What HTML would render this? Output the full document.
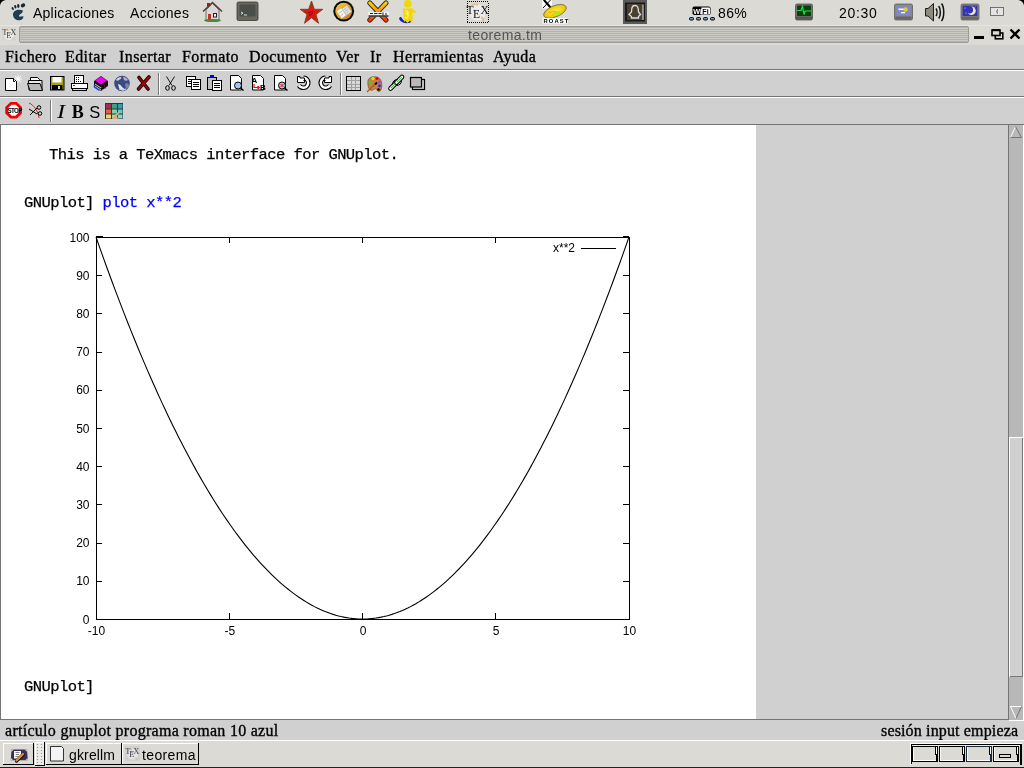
<!DOCTYPE html>
<html><head><meta charset="utf-8">
<style>
*{margin:0;padding:0;box-sizing:border-box}
html,body{width:1024px;height:768px;overflow:hidden;background:#dcdad5;font-family:"Liberation Sans",sans-serif}
.a{position:absolute;will-change:transform}
#panel{left:0;top:0;width:1024px;height:25px;background:#dcdad5}
#title{left:0;top:25px;width:1024px;height:20px;background:#dcdad5}
#stripes{left:19px;top:26px;width:950px;height:17px;border:1px solid #9d9b96;border-radius:2px;
 background:repeating-linear-gradient(to bottom,#b4b2ad 0,#b4b2ad 1px,#cccac5 1px,#cccac5 2px)}
#menubar{left:0;top:45px;width:1024px;height:25px;background:#d0d0d0;border-bottom:1px solid #747474}
#tb1{left:0;top:70px;width:1024px;height:27px;background:#d0d0d0;border-top:1px solid #fff;border-bottom:1px solid #747474}
#tb2{left:0;top:97px;width:1024px;height:28px;background:#d0d0d0;border-top:1px solid #fff;border-bottom:1px solid #747474}
#content{left:0;top:125px;width:1009px;height:595px;background:#d0d0d0}
#page{left:0;top:125px;width:756px;height:594px;background:#fff}
#status{left:0;top:720px;width:1024px;height:20px;background:#d0d0d0}
#taskbar{left:0;top:740px;width:1024px;height:28px;background:#dcdad5}
.menu{font-family:"Liberation Serif",serif;-webkit-text-stroke:0.35px #000;font-size:16px;letter-spacing:0.4px;line-height:20px;color:#000;top:47px}
.mono{font-family:"Liberation Mono",monospace;-webkit-text-stroke:0.25px currentColor;font-size:15.5px;letter-spacing:-0.57px;line-height:20px;color:#000}
</style></head><body>
<div id="panel" class="a"></div>
<div id="title" class="a"></div>
<div class="a" style="left:0;top:25px;width:1024px;height:1px;background:#e6e4e0"></div>
<div id="stripes" class="a"></div>
<div id="menubar" class="a"></div>
<div id="tb1" class="a"></div>
<div id="tb2" class="a"></div>
<div id="content" class="a"></div>
<div id="page" class="a"></div>
<div id="status" class="a"></div>
<div id="taskbar" class="a"></div>

<div class="a" style="left:33px;top:5px;font-size:14px;letter-spacing:0.25px;color:#000">Aplicaciones</div>
<div class="a" style="left:130px;top:5px;font-size:14px;letter-spacing:0.3px;color:#000">Acciones</div>
<div class="a" style="left:839px;top:5px;font-size:14px;letter-spacing:0.7px;color:#000">20:30</div>
<div class="a" style="left:718px;top:5px;font-size:14px;letter-spacing:0.4px;color:#000">86%</div>
<div class="a" style="left:468px;top:26px;font-size:14px;line-height:18px;letter-spacing:0.35px;color:#555">teorema.tm</div>

<div class="a menu" style="left:5px">Fichero</div>
<div class="a menu" style="left:65px">Editar</div>
<div class="a menu" style="left:119px">Insertar</div>
<div class="a menu" style="left:182px">Formato</div>
<div class="a menu" style="left:249px">Documento</div>
<div class="a menu" style="left:336px">Ver</div>
<div class="a menu" style="left:370px">Ir</div>
<div class="a menu" style="left:393px">Herramientas</div>
<div class="a menu" style="left:493px">Ayuda</div>

<div class="a mono" style="left:49px;top:145px">This is a TeXmacs interface for GNUplot.</div>
<div class="a mono" style="left:24px;top:193px">GNUplot] <span style="color:#0000ff">plot x**2</span></div>
<div class="a mono" style="left:24px;top:677px">GNUplot]</div>

<div class="a" style="left:5px;top:721px;font-family:'Liberation Serif',serif;-webkit-text-stroke:0.35px #000;font-size:16px;line-height:20px;letter-spacing:0.28px">artículo gnuplot programa roman 10 azul</div>
<div class="a" style="left:881px;top:721px;font-family:'Liberation Serif',serif;-webkit-text-stroke:0.35px #000;font-size:16px;line-height:20px;letter-spacing:0.15px">sesión input empieza</div>
<svg class="a" style="left:0;top:0" width="1024" height="768" viewBox="0 0 1024 768">
<g fill="none" stroke="#000" stroke-width="1" shape-rendering="crispEdges">
<rect x="96.5" y="237.5" width="533" height="382"/>
<path d="M96,619.5h6M629,619.5h-6M96,581.5h6M629,581.5h-6M96,543.5h6M629,543.5h-6M96,504.5h6M629,504.5h-6M96,466.5h6M629,466.5h-6M96,428.5h6M629,428.5h-6M96,390.5h6M629,390.5h-6M96,352.5h6M629,352.5h-6M96,313.5h6M629,313.5h-6M96,275.5h6M629,275.5h-6M96,237.5h6M629,237.5h-6M229.5,619v-6M229.5,237v6M362.5,619v-6M362.5,237v6M495.5,619v-6M495.5,237v6"/>
<path d="M581,248.5h35M96,236.5h7M623,236.5h6"/>
</g>
<polyline fill="none" stroke="#000" stroke-width="1.1" points="96.00,237.00 98.66,244.60 101.33,252.13 104.00,259.58 106.66,266.95 109.33,274.25 111.99,281.46 114.65,288.61 117.32,295.68 119.99,302.67 122.65,309.58 125.31,316.42 127.98,323.18 130.65,329.86 133.31,336.47 135.97,343.00 138.64,349.46 141.30,355.84 143.97,362.14 146.63,368.37 149.30,374.52 151.96,380.59 154.63,386.59 157.30,392.51 159.96,398.36 162.62,404.12 165.29,409.82 167.96,415.43 170.62,420.97 173.29,426.43 175.95,431.82 178.61,437.13 181.28,442.36 183.95,447.52 186.61,452.60 189.28,457.61 191.94,462.53 194.61,467.38 197.27,472.16 199.94,476.86 202.60,481.48 205.27,486.03 207.93,490.50 210.59,494.89 213.26,499.20 215.93,503.44 218.59,507.61 221.25,511.70 223.92,515.71 226.59,519.64 229.25,523.50 231.92,527.28 234.58,530.99 237.25,534.62 239.91,538.17 242.57,541.64 245.24,545.04 247.91,548.37 250.57,551.62 253.24,554.79 255.90,557.88 258.56,560.90 261.23,563.84 263.90,566.70 266.56,569.49 269.23,572.21 271.89,574.84 274.56,577.40 277.22,579.88 279.88,582.29 282.55,584.62 285.22,586.87 287.88,589.05 290.55,591.15 293.21,593.18 295.88,595.12 298.54,597.00 301.21,598.79 303.87,600.51 306.53,602.15 309.20,603.72 311.87,605.21 314.53,606.62 317.20,607.96 319.86,609.22 322.52,610.40 325.19,611.51 327.86,612.54 330.52,613.50 333.19,614.38 335.85,615.18 338.51,615.91 341.18,616.56 343.85,617.13 346.51,617.62 349.18,618.04 351.84,618.39 354.50,618.66 357.17,618.85 359.83,618.96 362.50,619.00 365.17,618.96 367.83,618.85 370.50,618.66 373.16,618.39 375.82,618.04 378.49,617.62 381.16,617.13 383.82,616.56 386.49,615.91 389.15,615.18 391.82,614.38 394.48,613.50 397.15,612.54 399.81,611.51 402.48,610.40 405.14,609.22 407.81,607.96 410.47,606.62 413.13,605.21 415.80,603.72 418.47,602.15 421.13,600.51 423.80,598.79 426.46,597.00 429.12,595.12 431.79,593.18 434.46,591.15 437.12,589.05 439.78,586.87 442.45,584.62 445.12,582.29 447.78,579.88 450.45,577.40 453.11,574.84 455.77,572.21 458.44,569.49 461.11,566.70 463.77,563.84 466.44,560.90 469.10,557.88 471.77,554.79 474.43,551.62 477.10,548.37 479.76,545.04 482.43,541.64 485.09,538.17 487.75,534.62 490.42,530.99 493.08,527.28 495.75,523.50 498.42,519.64 501.08,515.71 503.75,511.70 506.41,507.61 509.07,503.44 511.74,499.20 514.40,494.89 517.07,490.50 519.74,486.03 522.40,481.48 525.07,476.86 527.73,472.16 530.39,467.38 533.06,462.53 535.73,457.61 538.39,452.60 541.06,447.52 543.72,442.36 546.38,437.13 549.05,431.82 551.72,426.43 554.38,420.97 557.04,415.43 559.71,409.82 562.38,404.12 565.04,398.36 567.71,392.51 570.37,386.59 573.04,380.59 575.70,374.52 578.37,368.37 581.03,362.14 583.69,355.84 586.36,349.46 589.02,343.00 591.69,336.47 594.36,329.86 597.02,323.18 599.69,316.42 602.35,309.58 605.02,302.67 607.68,295.68 610.35,288.61 613.01,281.46 615.67,274.25 618.34,266.95 621.01,259.58 623.67,252.13 626.34,244.60 629.00,237.00"/>
<g font-family="Liberation Sans, sans-serif" font-size="12" fill="#000">
<text x="89.5" y="623.5" text-anchor="end">0</text><text x="89.5" y="585.3" text-anchor="end">10</text><text x="89.5" y="547.1" text-anchor="end">20</text><text x="89.5" y="508.9" text-anchor="end">30</text><text x="89.5" y="470.7" text-anchor="end">40</text><text x="89.5" y="432.5" text-anchor="end">50</text><text x="89.5" y="394.3" text-anchor="end">60</text><text x="89.5" y="356.1" text-anchor="end">70</text><text x="89.5" y="317.9" text-anchor="end">80</text><text x="89.5" y="279.7" text-anchor="end">90</text><text x="89.5" y="241.5" text-anchor="end">100</text>
<text x="96.5" y="635" text-anchor="middle">-10</text><text x="229.8" y="635" text-anchor="middle">-5</text><text x="363.0" y="635" text-anchor="middle">0</text><text x="496.2" y="635" text-anchor="middle">5</text><text x="629.5" y="635" text-anchor="middle">10</text>
<text x="575" y="252" text-anchor="end">x**2</text>
</g>
</svg>
<div class="a" style="left:69px;top:746px;font-size:14px;line-height:18px;letter-spacing:0.15px;color:#000">gkrellm</div>
<div class="a" style="left:142px;top:746px;font-size:14px;line-height:18px;letter-spacing:0.35px;color:#000">teorema</div>
<svg class="a" style="left:0;top:0" width="1024" height="768" viewBox="0 0 1024 768">
<defs><linearGradient id="xg" x1="0" y1="0" x2="0" y2="1" gradientUnits="objectBoundingBox"><stop offset="0" stop-color="#ffd000"/><stop offset="0.55" stop-color="#ff8800"/><stop offset="1" stop-color="#ff3300"/></linearGradient></defs>
<!-- screen corners -->
<path d="M0,0h5.5C2.5,0.5 0.5,2.5 0,5.5z" fill="#000"/>
<path d="M1024,0h-5.5C1021.5,0.5 1023.5,2.5 1024,5.5z" fill="#000"/>
<!-- gnome foot -->
<g fill="#1a2a35">
<ellipse cx="12.7" cy="8.6" rx="1" ry="1.6" transform="rotate(-30 12.7 8.6)"/>
<ellipse cx="15.3" cy="6.8" rx="1.1" ry="1.8" transform="rotate(-15 15.3 6.8)"/>
<ellipse cx="18.3" cy="5.9" rx="1.2" ry="2" transform="rotate(-5 18.3 5.9)"/>
<ellipse cx="23" cy="5.4" rx="2.3" ry="1.9" transform="rotate(-30 23 5.4)"/>
</g>
<path d="M22.6,10.2C18.5,8.7 12.7,10.2 13,15C13.3,19 16.8,20.5 19.8,20.2C22.5,19.9 23.6,18.2 23.4,16.3L20.4,16.6C19.2,16.8 18.4,16 19.4,15C21,13.6 23.6,12.2 22.6,10.2Z" fill="#1f3d50"/>
<!-- house -->
<rect x="207" y="3" width="3" height="4" fill="#8a2a20"/>
<path d="M206,10L212.5,3.5L219,10V20H206Z" fill="#d8d8d8" stroke="#555" stroke-width="0.8"/>
<path d="M203,11.5L212.5,2.5L222,11.5" fill="none" stroke="#5a4030" stroke-width="1.6"/>
<rect x="208" y="14" width="3" height="6" fill="#c03030"/>
<rect x="213.5" y="13.5" width="3" height="3.5" fill="#fff" stroke="#222" stroke-width="1"/>
<ellipse cx="212.5" cy="20.5" rx="8.5" ry="1.6" fill="#4a8a3a"/>
<!-- terminal -->
<rect x="237" y="2" width="21" height="18.5" rx="1.5" fill="#6a665e" stroke="#3a3833" stroke-width="0.8"/>
<rect x="239.5" y="4.5" width="16" height="12" rx="1" fill="#4a4e48"/>
<path d="M241,12l2,1.2l-2,1.2M244,15h3" stroke="#eee" stroke-width="0.9" fill="none"/>
<!-- star -->
<path d="M311.5,1L314.3,9.3H322.8L316,14.4L318.5,23.3L311.5,17.8L304.5,23.3L307,14.4L300.2,9.3H308.7Z" fill="#e81010" stroke="#5a5020" stroke-width="0.9"/>
<path d="M308,13c1.5,-1 3.5,-1.5 5,-0.5M309,15c2,0 3,-1 4,-2" stroke="#400" stroke-width="0.8" fill="none"/>
<!-- gold circle -->
<defs><linearGradient id="gg" x1="0" y1="0" x2="1" y2="1"><stop offset="0" stop-color="#fcd040"/><stop offset="1" stop-color="#c87800"/></linearGradient></defs>
<circle cx="343.7" cy="11.2" r="10.4" fill="#0a0a0a"/>
<circle cx="343.7" cy="11.2" r="8.4" fill="url(#gg)"/>
<g transform="rotate(-35 344 11.5)">
<rect x="338" y="7" width="6" height="9" fill="#f4f4f4" stroke="#aaa" stroke-width="0.5"/>
<rect x="344" y="8" width="6" height="8" fill="#e8e8e8" stroke="#aaa" stroke-width="0.5"/>
<path d="M345,10h4M345,12h4M345,14h3M339,10h4M339,13h3" stroke="#999" stroke-width="0.6"/>
</g>
<!-- xchat X -->
<path d="M369.8,3L386,20M386,3L369.8,20" stroke="#2a2a2a" stroke-width="5" stroke-linecap="round"/>
<path d="M369.8,3L386,20M386,3L369.8,20" stroke="url(#xg)" stroke-width="3.2" stroke-linecap="round"/>
<rect x="368" y="12" width="21" height="4.5" fill="#f0f0f0"/>
<path d="M368.5,16h20" stroke="#000" stroke-width="1.2"/>
<path d="M370,13.5h3M374,13.5h3.5M378.5,13.5h3M383,12.5v3M385,14h2" stroke="#222" stroke-width="1"/>
<!-- gaim person -->
<path d="M400.5,18.5c1,3 5,4 9,3" stroke="#1020b8" stroke-width="2.8" fill="none" stroke-linecap="round"/>
<circle cx="407.8" cy="3.8" r="3.8" fill="#f0d800"/>
<path d="M403,8.5h9.5l3.5,3.5l-0.8,1.2l-2.7,-1.2V23l-2.5,-2.5l-2.5,2.5l-2.5,-2.5l-1,2z" fill="#f0d800"/>
<path d="M405.5,11c1.5,-0.5 3,0.5 2.5,2c-0.5,1.5 -2.5,1 -2.5,-0.5M408,13.5v3c0,2 -3,2 -3,0.5" stroke="#fff" stroke-width="0.8" fill="none"/>
<!-- TeX icon -->
<circle cx="477.5" cy="12.5" r="8" fill="#ececec"/>
<path d="M471,6c2,-2 5,-2 7,-1M481,17c2,1 3,3 2,5" stroke="#e8b888" stroke-width="1.5" fill="none"/>
<path d="M473.5,10.5h2" stroke="#a0a0ff" stroke-width="1.5"/>
<text x="466.5" y="13.5" font-family="Liberation Serif,serif" font-size="11.5" fill="#111">T</text>
<text x="473" y="17.5" font-family="Liberation Serif,serif" font-size="11.5" fill="#111">E</text>
<text x="480.5" y="13.5" font-family="Liberation Serif,serif" font-size="11.5" fill="#111">X</text>
<g fill="#000"><rect x="467" y="1" width="1" height="1"/><rect x="467" y="22" width="1" height="1"/><rect x="469" y="1" width="1" height="1"/><rect x="469" y="22" width="1" height="1"/><rect x="471" y="1" width="1" height="1"/><rect x="471" y="22" width="1" height="1"/><rect x="473" y="1" width="1" height="1"/><rect x="473" y="22" width="1" height="1"/><rect x="475" y="1" width="1" height="1"/><rect x="475" y="22" width="1" height="1"/><rect x="477" y="1" width="1" height="1"/><rect x="477" y="22" width="1" height="1"/><rect x="479" y="1" width="1" height="1"/><rect x="479" y="22" width="1" height="1"/><rect x="481" y="1" width="1" height="1"/><rect x="481" y="22" width="1" height="1"/><rect x="483" y="1" width="1" height="1"/><rect x="483" y="22" width="1" height="1"/><rect x="485" y="1" width="1" height="1"/><rect x="485" y="22" width="1" height="1"/><rect x="487" y="1" width="1" height="1"/><rect x="487" y="22" width="1" height="1"/><rect x="467" y="3" width="1" height="1"/><rect x="488" y="3" width="1" height="1"/><rect x="467" y="5" width="1" height="1"/><rect x="488" y="5" width="1" height="1"/><rect x="467" y="7" width="1" height="1"/><rect x="488" y="7" width="1" height="1"/><rect x="467" y="9" width="1" height="1"/><rect x="488" y="9" width="1" height="1"/><rect x="467" y="11" width="1" height="1"/><rect x="488" y="11" width="1" height="1"/><rect x="467" y="13" width="1" height="1"/><rect x="488" y="13" width="1" height="1"/><rect x="467" y="15" width="1" height="1"/><rect x="488" y="15" width="1" height="1"/><rect x="467" y="17" width="1" height="1"/><rect x="488" y="17" width="1" height="1"/><rect x="467" y="19" width="1" height="1"/><rect x="488" y="19" width="1" height="1"/><rect x="467" y="21" width="1" height="1"/><rect x="488" y="21" width="1" height="1"/></g>
<!-- xcdroast -->
<rect x="542" y="0" width="10" height="8.5" fill="#fff"/>
<path d="M543.5,0L551,8M550.5,0L543,8" stroke="#000" stroke-width="1"/>
<path d="M544,0L551,8" stroke="#000" stroke-width="2"/>
<defs><radialGradient id="cd" cx="0.5" cy="0.5" r="0.5"><stop offset="0" stop-color="#f8f040"/><stop offset="0.5" stop-color="#f4d820"/><stop offset="1" stop-color="#f0c000"/></radialGradient></defs>
<ellipse cx="555" cy="11.3" rx="12" ry="5.6" transform="rotate(-22 555 11.3)" fill="url(#cd)" stroke="#333" stroke-width="0.5"/>
<path d="M549,13l6,-2M552,16l4,-5M558,16l-2,-5" stroke="#f0a000" stroke-width="0.8"/>
<ellipse cx="557.5" cy="13" rx="3" ry="2" fill="#b0e820"/>
<rect x="542.5" y="18" width="25" height="5.5" fill="#fff"/>
<text x="543.5" y="23" font-family="Liberation Sans,sans-serif" font-size="5.8" font-weight="bold" letter-spacing="1.1" fill="#000">ROAST</text>
<!-- dark icon -->
<rect x="623" y="0" width="24" height="24" fill="#5a5a5a"/>
<rect x="625" y="2.5" width="20" height="19" fill="#1a1a1a"/>
<rect x="627" y="4" width="16" height="16" fill="#4a4030"/>
<path d="M629,14.5l2.5,-2.5C631.5,6 633,5.5 635,5.5C637,5.5 638.5,6 638.5,12l2,2.5l-2,2V18h-7v-1.5z" fill="none" stroke="#ddd" stroke-width="1.3"/>
<path d="M643,4.5V20" stroke="#ccc" stroke-width="1.2"/>
<!-- wifi -->
<rect x="692.5" y="6.5" width="18" height="8.5" rx="1.8" fill="#000"/>
<path d="M701.5,7.5h7.5a1,1 0 0 1 1,1v5a1,1 0 0 1 -1,1h-8.5z" fill="#fff"/>
<text x="693.3" y="13.6" font-family="Liberation Sans,sans-serif" font-size="7.2" font-weight="bold" fill="#fff">Wi</text>
<text x="702.3" y="13.6" font-family="Liberation Sans,sans-serif" font-size="7.2" font-weight="bold" fill="#000">Fi</text>
<g fill="#6a9ac8" stroke="#000" stroke-width="1">
<rect x="689.5" y="17.5" width="4" height="2.5" rx="1"/>
<rect x="696.5" y="17.5" width="4" height="2.5" rx="1"/>
<rect x="703.5" y="17.5" width="4" height="2.5" rx="1"/>
<rect x="710.5" y="17.5" width="4" height="2.5" rx="1"/>
</g>
<!-- green monitor -->
<rect x="795.5" y="4" width="17" height="16" rx="1.5" fill="#777" stroke="#444" stroke-width="0.7"/>
<rect x="797" y="5.5" width="14" height="10.5" fill="#0a4010"/>
<path d="M797,10.5h4l1.5,-4l1.5,8l1,-3.5h6" stroke="#20e040" stroke-width="1.2" fill="none"/>
<rect x="796" y="16.5" width="16" height="3" fill="#555"/>
<!-- weather monitor -->
<rect x="894.5" y="4" width="18" height="16" rx="1.5" fill="#888" stroke="#555" stroke-width="0.7"/>
<rect x="896.5" y="5.5" width="14" height="10" fill="#8088c8"/>
<circle cx="905.5" cy="9.5" r="2.2" fill="#e0d020"/>
<rect x="898.5" y="8.5" width="5" height="1.5" fill="#fff"/>
<rect x="901" y="12" width="4" height="1.3" fill="#fff"/>
<rect x="895.5" y="16.5" width="16" height="3" fill="#666"/>
<!-- speaker -->
<path d="M925.5,8.5h2.5l5.5,-5v17.5l-5.5,-5h-2.5z" fill="#8e8a80" stroke="#1a1a1a" stroke-width="1"/>
<path d="M936,8.5c1.3,2 1.3,5.5 0,7.5M938.7,6c2.2,3 2.2,9.5 0,12.5M941.5,3.5c3,4 3,13.5 0,17.5" fill="none" stroke="#111" stroke-width="1.5"/>
<!-- moon monitor -->
<rect x="961" y="4" width="18" height="16" rx="1.5" fill="#8a8a84" stroke="#555" stroke-width="0.7"/>
<rect x="962.5" y="5.5" width="15" height="10.5" fill="#3434b4"/>
<circle cx="971.5" cy="10.8" r="4.3" fill="#ece8b8"/>
<circle cx="969.3" cy="9.8" r="3.8" fill="#3434b4"/>
<circle cx="965" cy="8" r="0.5" fill="#fff"/><circle cx="966" cy="13" r="0.5" fill="#fff"/><circle cx="975" cy="7" r="0.4" fill="#fff"/>
<rect x="962" y="16.5" width="16" height="3" fill="#666"/>
<!-- small icon -->
<rect x="990.5" y="7.5" width="13" height="8" fill="#e4e4e4" stroke="#555" stroke-width="0.8"/>
<path d="M998,9.5c-1.5,0 -1.5,4 0,4" stroke="#333" stroke-width="0.8" fill="none"/>

<!-- title TeX icon -->
<rect x="2" y="27" width="14" height="14" fill="#d6d6d6"/>
<circle cx="9" cy="35" r="5" fill="#ecebea"/>
<path d="M5,31c1,-1 3,-1 4,0M12,38c1,0 2,1 2,2" stroke="#e8c0a0" stroke-width="1.2" fill="none"/>
<path d="M8,33.5h2" stroke="#b0b0ff" stroke-width="1.2"/>
<text x="2.3" y="34.5" font-family="Liberation Serif,serif" font-size="8.5" fill="#444">T</text>
<text x="6.3" y="38" font-family="Liberation Serif,serif" font-size="8.5" fill="#444">E</text>
<text x="10.3" y="34.5" font-family="Liberation Serif,serif" font-size="8.5" fill="#444">X</text>
<!-- window buttons -->
<rect x="974" y="36" width="10" height="3" fill="#000"/>
<rect x="995.3" y="33" width="7.5" height="5.8" fill="none" stroke="#000" stroke-width="1.6"/>
<rect x="992" y="30" width="8" height="5.5" fill="#dcdad5" stroke="#000" stroke-width="1.6"/>
<rect x="992" y="29.2" width="8" height="2" fill="#000"/>
<path d="M1010.5,29.5L1019.5,38.5M1019.5,29.5L1010.5,38.5" stroke="#000" stroke-width="2.4"/>
<!-- toolbar separators -->
<g shape-rendering="crispEdges">
<path d="M158.5,73v22M340.5,73v22M50.5,100v22" stroke="#777"/>
<path d="M159.5,73v22M341.5,73v22M51.5,100v22" stroke="#fff"/>
</g>
<!-- new doc -->
<path d="M5.5,78.5h8l3,3v9h-11z" fill="#fff" stroke="#000" stroke-width="1"/>
<path d="M13.5,78.5v3h3" fill="none" stroke="#000" stroke-width="1"/>
<path d="M18,75v8M14,79h8M15,76l6,6M21,76l-6,6" stroke="#fff" stroke-width="1"/>
<!-- open folder -->
<path d="M30.5,77.5h7l2,2v4h-9z" fill="#fff" stroke="#000" stroke-width="1"/>
<path d="M28.5,80.5h13.5v9.5h-13z" fill="#e8e8e8" stroke="#000" stroke-width="1"/>
<path d="M27.5,83.5h12.5l2.5,7h-12.5z" fill="#b8b8b8" stroke="#000" stroke-width="1"/>
<!-- save floppy -->
<rect x="50.5" y="76.5" width="13.5" height="13.5" fill="#a8a010" stroke="#000" stroke-width="1"/>
<rect x="52.5" y="77" width="9" height="5.5" fill="#fff"/>
<rect x="52" y="85" width="10.5" height="5" fill="#000"/>
<rect x="58" y="86" width="2" height="3" fill="#ddd"/>
<!-- print -->
<rect x="74.5" y="75.5" width="9" height="8" fill="#fff" stroke="#000" stroke-width="1"/>
<g fill="#000" shape-rendering="crispEdges"><rect x="76" y="77" width="1" height="1"/><rect x="78" y="77" width="1" height="1"/><rect x="76" y="79" width="1" height="1"/><rect x="78" y="79" width="1" height="1"/><rect x="76" y="81" width="1" height="1"/><rect x="78" y="81" width="1" height="1"/><rect x="80" y="81" width="1" height="1"/></g>
<rect x="71.5" y="83.5" width="16" height="5" fill="#fff" stroke="#000" stroke-width="1"/>
<rect x="72.5" y="88.5" width="14" height="2" fill="#ddd" stroke="#000" stroke-width="1"/>
<rect x="73" y="85" width="2" height="1" fill="#e00"/>
<!-- books -->
<path d="M94,81l7,-5l7,5v5l-7,5l-7,-5z" fill="#111"/>
<path d="M95,80.5l6,-4l6,4l-6,4z" fill="#f000f0"/>
<path d="M95,84l6,4M95,86l6,4" stroke="#fff" stroke-width="0.8"/>
<path d="M94.5,85v2l5,3.5" stroke="#2040ff" stroke-width="1.5" fill="none"/>
<path d="M101,87.5h1M104,86h1M102,89.5h1M105,88h1" stroke="#f00" stroke-width="1"/>
<!-- globe -->
<circle cx="122" cy="83.5" r="7.8" fill="#3a4a88"/>
<path d="M116,80c1,-2 3,-3 5,-3c1,1 0,2 -2,3c-1,1 -2,1 -3,0z" fill="#d8d0c8"/>
<path d="M123,77c2,0 4,1 5,3c-1,1 -3,1 -4,0z" fill="#b8b0c0"/>
<path d="M118,84c1,0 3,1 4,3c1,1 3,2 3,3c-2,1 -5,0 -6,-2z" fill="#e8e4e0"/>
<path d="M125,84c1,-1 3,-1 4,1c0,2 -1,3 -3,4z" fill="#8080a8"/>
<path d="M119,89c2,1 5,1 7,0" stroke="#c8c8d0" stroke-width="1.2" fill="none"/>
<!-- red x -->
<path d="M138.5,89L149,77M139,77.5L148,89" stroke="#000" stroke-width="3.6" stroke-linecap="round"/>
<path d="M138.5,89L149,77M139,77.5L148,89" stroke="#a00000" stroke-width="2" stroke-linecap="round"/>
<!-- scissors -->
<path d="M166.5,76.5L172,85.5M174.5,76.5L169,85.5" stroke="#000" stroke-width="0.9"/>
<ellipse cx="167.5" cy="88" rx="1.8" ry="2.3" fill="none" stroke="#000" stroke-width="1"/>
<ellipse cx="173.5" cy="88" rx="1.8" ry="2.3" fill="none" stroke="#000" stroke-width="1"/>
<!-- copy -->
<g shape-rendering="crispEdges">
<rect x="186.5" y="76.5" width="9" height="10" fill="#fff" stroke="#000"/>
<path d="M188,79.5h5M188,81.5h3M188,83.5h3" stroke="#000"/>
<rect x="191.5" y="79.5" width="9" height="10" fill="#fff" stroke="#000"/>
<path d="M193,82.5h6M193,84.5h6M193,86.5h6" stroke="#000"/>
<!-- paste -->
<rect x="207.5" y="77.5" width="9" height="12" fill="#c0c0c0" stroke="#000"/>
<rect x="210" y="75" width="4" height="3" fill="#0000e0"/>
<rect x="212.5" y="80.5" width="9" height="10" fill="#fff" stroke="#000"/>
<path d="M214,83.5h6M214,85.5h6M214,87.5h6" stroke="#000"/>
</g>
<!-- find -->
<path d="M230.5,75.5h8l3,3v11.5h-11z" fill="#fff" stroke="#000" stroke-width="1"/>
<circle cx="238" cy="85.5" r="3.5" fill="#a8c4e8" stroke="#000" stroke-width="1"/>
<path d="M240.5,88l3,2.5" stroke="#000" stroke-width="1.6"/>
<!-- replace -->
<path d="M252.5,75.5h8l3,3v11.5h-11z" fill="#fff" stroke="#000" stroke-width="1"/>
<text x="251.5" y="82.5" font-family="Liberation Sans,sans-serif" font-size="8" font-weight="bold" fill="#000">A</text>
<text x="260" y="90" font-family="Liberation Sans,sans-serif" font-size="8" font-weight="bold" fill="#000">B</text>
<path d="M254,84v3.5h5M257.5,86l1.8,1.5l-1.8,1.5" stroke="#f00" stroke-width="1.2" fill="none"/>
<!-- spell -->
<path d="M274.5,75.5h8l3,3v11.5h-11z" fill="#fff" stroke="#000" stroke-width="1"/>
<circle cx="282" cy="85.5" r="3.5" fill="#a8c4e8" stroke="#000" stroke-width="1"/>
<path d="M280.5,84l3,3M283.5,84l-3,3" stroke="#f00" stroke-width="1"/>
<path d="M284.5,88l3,2.5" stroke="#000" stroke-width="1.6"/>
<!-- undo -->
<path d="M299,85.5A5,5 0 1 0 303.5,77.8" fill="none" stroke="#000" stroke-width="4.6"/>
<path d="M299,85.5A5,5 0 1 0 303.5,77.8" fill="none" stroke="#fff" stroke-width="2.4"/>
<path d="M297.5,76.5h2.5v1.5h4.5v4.5h-7z" fill="#fff" stroke="#000" stroke-width="1"/>
<path d="M303.5,80.5h2" stroke="#000" stroke-width="1"/>
<!-- redo -->
<path d="M330,85.5A5,5 0 1 1 325.5,77.8" fill="none" stroke="#000" stroke-width="4.6"/>
<path d="M330,85.5A5,5 0 1 1 325.5,77.8" fill="none" stroke="#fff" stroke-width="2.4"/>
<path d="M331.5,76.5h-2.5v1.5h-4.5v4.5h7z" fill="#fff" stroke="#000" stroke-width="1"/>
<path d="M325.5,80.5h-2" stroke="#000" stroke-width="1"/>
<!-- table -->
<g shape-rendering="crispEdges">
<rect x="346" y="76" width="15" height="15" fill="#000"/>
<rect x="347" y="77" width="13" height="13" fill="#d8d8d8"/>
<path d="M351.5,77v13M355.5,77v13M347,80.5h13M347,84.5h13M347,87.5h13" stroke="#a0a0a0"/>
</g>
<!-- palette -->
<path d="M368,80c2,-4 8,-4 11,-2c3,2 3.5,8 2,12c-1,2 -3,2 -4,0c-1,-2 -3,-1 -4,0c-2,1 -6,0 -5,-10z" fill="#c88040" stroke="#704010" stroke-width="0.6"/>
<circle cx="370" cy="82" r="1.4" fill="#20e020"/>
<circle cx="373" cy="78.5" r="1.5" fill="#f0e000"/>
<circle cx="377" cy="78.5" r="1.5" fill="#f00000"/>
<circle cx="379.5" cy="82" r="1.4" fill="#a040f0"/>
<circle cx="379.5" cy="86" r="1.4" fill="#2030f0"/>
<circle cx="378.5" cy="89.5" r="1.3" fill="#000"/>
<path d="M367,92L376,83" stroke="#a06020" stroke-width="1.2"/>
<path d="M375,84.5l2,-2" stroke="#000" stroke-width="1.8"/>
<!-- link -->
<path d="M390.5,88.5L396,83" stroke="#000" stroke-width="4.6" stroke-linecap="round"/>
<path d="M390.5,88.5L396,83" stroke="#fff" stroke-width="2.6" stroke-linecap="round"/>
<path d="M390.8,88.2L395.7,83.3" stroke="#30d030" stroke-width="1.2"/>
<path d="M396.5,82.5L402,77" stroke="#000" stroke-width="4.6" stroke-linecap="round"/>
<path d="M396.5,82.5L402,77" stroke="#fff" stroke-width="2.6" stroke-linecap="round"/>
<path d="M396.8,82.2L401.7,77.3" stroke="#30d030" stroke-width="1.2"/>
<path d="M392.5,84.5c0,-3 2,-5 5,-5M396.5,85.5c3,0 5,-2 5,-5" fill="none" stroke="#000" stroke-width="1"/>
<!-- window -->
<rect x="412.5" y="79.5" width="12" height="10" fill="#d0d0d0" stroke="#000" stroke-width="1.2"/>
<rect x="410.5" y="77.5" width="11" height="9.5" fill="#b8b8b8" stroke="#000" stroke-width="1.2"/>
<!-- toolbar 2: stop -->
<path d="M11,103.3h5.2l4.3,4.3v5.2l-4.3,4.3h-5.2l-4.3,-4.3v-5.2z" fill="#fff" stroke="#f00000" stroke-width="2.8"/>
<text x="7.6" y="112.9" font-family="Liberation Sans,sans-serif" font-size="6.2" font-weight="bold" letter-spacing="-0.7" fill="#000" transform="translate(7.6 112.9) scale(1 1.3) translate(-7.6 -112.9)">STOP</text>
<!-- red scissors -->
<path d="M29,103c5,2 9,8 10,15" stroke="#f00" stroke-width="0.9" fill="none"/>
<path d="M29,109l8,5M30,115l7,-7" stroke="#000" stroke-width="1"/>
<circle cx="39" cy="107.5" r="1.8" fill="none" stroke="#000" stroke-width="1"/>
<circle cx="40" cy="113.5" r="1.8" fill="none" stroke="#000" stroke-width="1"/>
<!-- I B S -->
<text x="0" y="0" transform="translate(57 118) scale(1.35 1)" font-family="Liberation Serif,serif" font-style="italic" font-size="18" fill="#000">I</text>
<text x="71.8" y="118" font-family="Liberation Serif,serif" font-weight="bold" font-size="18" fill="#000">B</text>
<text x="89.3" y="118" font-family="Liberation Sans,sans-serif" font-size="16.5" fill="#000">S</text>
<!-- color grid -->
<rect x="105" y="103" width="18" height="16" fill="#333"/>
<rect x="106" y="104" width="5" height="4.5" fill="#a03050"/>
<rect x="112" y="104" width="5" height="4.5" fill="#40a080"/>
<rect x="118" y="104" width="4.5" height="4.5" fill="#30a0b0"/>
<rect x="106" y="109.5" width="5" height="4" fill="#e06040"/>
<rect x="112" y="109.5" width="5" height="4" fill="#80d0b0"/>
<rect x="118" y="109.5" width="4.5" height="4" fill="#60c8d0"/>
<rect x="106" y="114.5" width="5" height="4" fill="#f0d070"/>
<rect x="112" y="114.5" width="5" height="4" fill="#a0d8a0"/>
<rect x="118" y="114.5" width="4.5" height="4" fill="#80d8d0"/>
<path d="M112,119l3,-4l4,-4l1,1l-3,4l1,3z" fill="#d8b080"/>

<!-- scrollbar -->
<g shape-rendering="crispEdges">
<rect x="1009" y="125" width="14" height="595" fill="#b8b8b8"/>
<path d="M1008.5,125v595" stroke="#747474"/>
<path d="M1023.5,125v596M1009,720.5h15" stroke="#fff"/>
<path d="M0,719.5h1009M0.5,125v595" stroke="#747474"/>
<rect x="1009" y="437" width="14" height="240" fill="#fff"/>
<rect x="1010" y="438" width="13" height="239" fill="#777"/>
<rect x="1010" y="438" width="12" height="238" fill="#d0d0d0"/>
</g>
<path d="M1010.5,137.5L1015.5,126.5" stroke="#fff" stroke-width="1"/>
<path d="M1015.5,126.5L1021.5,137.5H1010.5" stroke="#747474" stroke-width="1" fill="none"/>
<path d="M1010.5,706.5H1021.5" stroke="#fff" stroke-width="1"/>
<path d="M1010.5,706.5L1016,718.5" stroke="#fff" stroke-width="1"/>
<path d="M1021.5,706.5L1016,718.5" stroke="#747474" stroke-width="1"/>
<!-- taskbar -->
<g shape-rendering="crispEdges">
<path d="M0,740.5h1024" stroke="#fff"/>
<path d="M0,767.5h1024" stroke="#222"/>
<!-- show desktop button -->
<path d="M3.5,764V743.5H33" stroke="#fff" fill="none"/>
<path d="M3,764.5H33.5V743" stroke="#000" fill="none"/>
<!-- handle -->
<rect x="35" y="742" width="9" height="24" fill="#ecebe8"/>
<path d="M35.5,766V742.5H44" stroke="#fff" fill="none"/><path d="M44.5,742V766M35,765.5h10" stroke="#000"/>
<!-- gkrellm button -->
<path d="M46.5,764V743.5H121" stroke="#fff" fill="none"/>
<path d="M46,764.5H121.5V743" stroke="#000" fill="none"/>
<!-- teorema button -->
<path d="M122.5,764V743.5H198" stroke="#fff" fill="none"/>
<path d="M122,764.5H198.5V743" stroke="#000" fill="none"/>
<!-- workspace switcher -->
<path d="M910.5,765V743H1022" stroke="#fff" fill="none"/>
<rect x="911" y="744" width="110" height="1" fill="#000"/>
<rect x="911" y="744" width="1" height="20" fill="#000"/>
<rect x="912" y="745" width="108" height="1" fill="#f0efec"/>
<rect x="1020" y="744" width="2" height="21" fill="#000"/>
<rect x="912" y="746" width="26" height="16" fill="#000"/>
<rect x="913" y="747" width="23" height="14" fill="#fff"/>
<rect x="914" y="748" width="22" height="12" fill="#dcdad5"/>
<rect x="914" y="747" width="22" height="1" fill="#dcdad5"/>
<rect x="935" y="747" width="1" height="8" fill="#000"/>
<rect x="936" y="747" width="1" height="7" fill="#fff"/>
<rect x="939" y="746" width="26" height="16" fill="#000"/>
<rect x="940" y="747" width="23" height="14" fill="#fff"/>
<rect x="941" y="748" width="22" height="12" fill="#dcdad5"/>
<rect x="941" y="747" width="22" height="1" fill="#dcdad5"/>
<rect x="962" y="747" width="1" height="8" fill="#000"/>
<rect x="963" y="747" width="1" height="7" fill="#fff"/>
<rect x="966" y="746" width="26" height="16" fill="#1a2a3a"/>
<rect x="967" y="747" width="23" height="14" fill="#fff"/>
<rect x="968" y="748" width="22" height="12" fill="#dcdad5"/>
<rect x="968" y="747" width="22" height="1" fill="#dcdad5"/>
<rect x="989" y="747" width="1" height="8" fill="#000"/>
<rect x="990" y="747" width="1" height="7" fill="#fff"/>
<rect x="993" y="746" width="26" height="16" fill="#000"/>
<rect x="994" y="747" width="23" height="14" fill="#fff"/>
<rect x="995" y="748" width="22" height="12" fill="#dcdad5"/>
<rect x="995" y="747" width="22" height="1" fill="#dcdad5"/>
<rect x="1016" y="747" width="1" height="8" fill="#000"/>
<rect x="1017" y="747" width="1" height="7" fill="#fff"/>
</g>
<rect x="999.5" y="754.5" width="11" height="3" fill="#dcdad5" stroke="#000" stroke-width="1" shape-rendering="crispEdges"/>
<!-- handle dots -->
<g fill="#888">
<rect x="37" y="744" width="1" height="1"/><rect x="41" y="744" width="1" height="1"/>
<rect x="37" y="747" width="1" height="1"/><rect x="41" y="747" width="1" height="1"/>
<rect x="37" y="750" width="1" height="1"/><rect x="41" y="750" width="1" height="1"/>
<rect x="37" y="753" width="1" height="1"/><rect x="41" y="753" width="1" height="1"/>
<rect x="37" y="756" width="1" height="1"/><rect x="41" y="756" width="1" height="1"/>
<rect x="37" y="759" width="1" height="1"/><rect x="41" y="759" width="1" height="1"/>
<rect x="37" y="762" width="1" height="1"/><rect x="41" y="762" width="1" height="1"/>
</g>
<!-- desktop icon -->
<path d="M11.5,749.5h15.5l0.8,10.8h-17z" fill="#3c2e54"/>
<path d="M11.5,749.5h2.5l-2.7,2.5zM27,749.5h-2.5l2.8,2.5zM10.8,760.3h2.5l-2.3,-2.3zM27.8,760.3h-2.5l2.3,-2.3z" fill="#d8d0c0"/>
<rect x="14" y="751" width="7" height="7.5" fill="#f4f4f4"/>
<path d="M15.5,752.5h4M16,754.5h3M15.5,756.5h3" stroke="#888" stroke-width="1"/>
<path d="M16.5,761L23,754.5" stroke="#000" stroke-width="3.2" stroke-linecap="round"/>
<path d="M16.5,760.5L23,754" stroke="#e89018" stroke-width="2.4" stroke-linecap="round"/>
<!-- gkrellm page icon -->
<path d="M50.5,746.5h11l2,2v12.5h-13z" fill="#f4f4f4" stroke="#333" stroke-width="1"/>
<!-- teorema TeX icon -->
<rect x="125" y="746" width="15" height="15" fill="#d0d0d0"/>
<circle cx="132.5" cy="754" r="5.5" fill="#e6e4e2"/>
<path d="M128,750c1,-1 3,-1 4,0M135,758c1,0 2,1 2,2" stroke="#e0b898" stroke-width="1.2" fill="none"/>
<path d="M131,752.5h2" stroke="#a8a8f0" stroke-width="1.2"/>
<text x="125.3" y="753.5" font-family="Liberation Serif,serif" font-size="8.5" fill="#444">T</text>
<text x="129.3" y="757" font-family="Liberation Serif,serif" font-size="8.5" fill="#444">E</text>
<text x="133.3" y="753.5" font-family="Liberation Serif,serif" font-size="8.5" fill="#444">X</text>

</svg>
</body></html>
